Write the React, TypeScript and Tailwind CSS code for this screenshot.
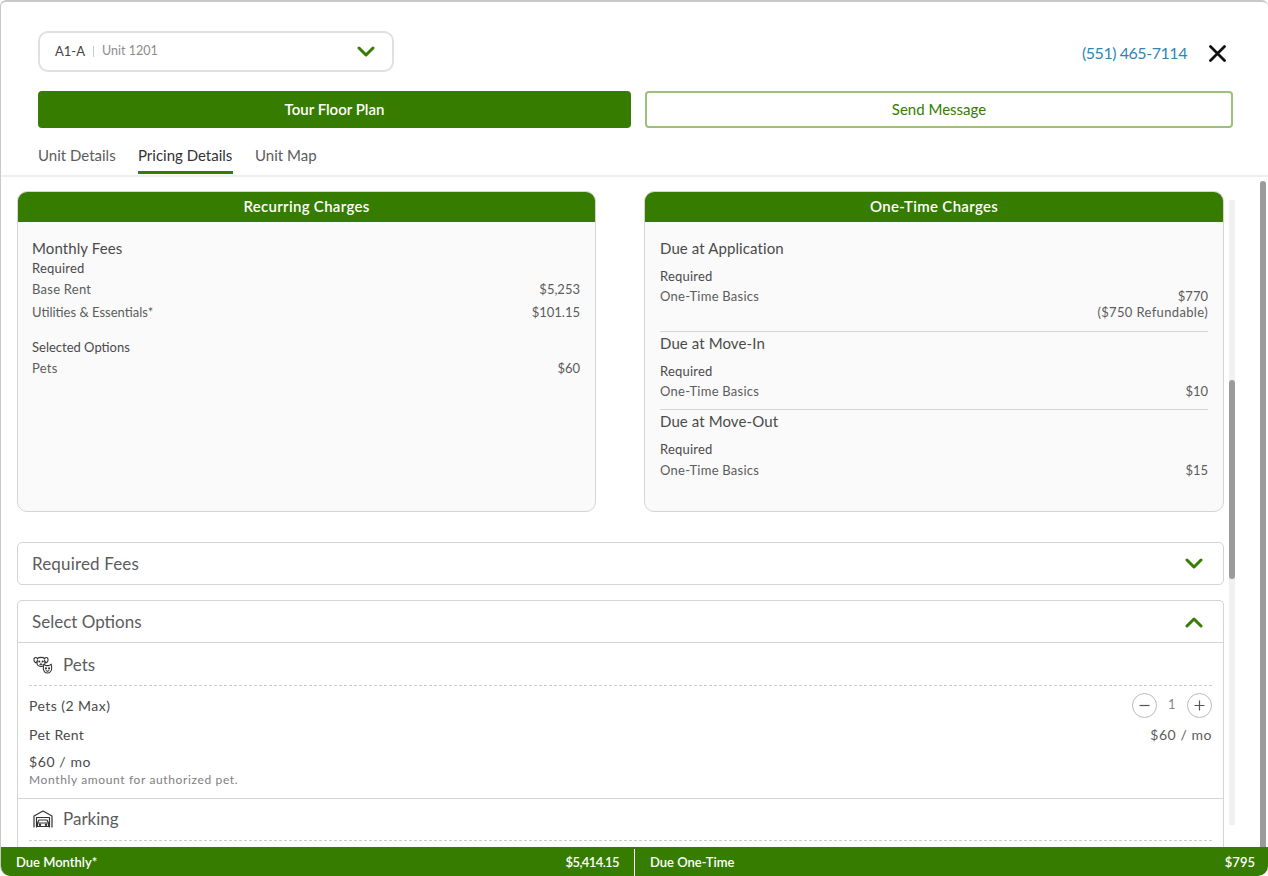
import React from "react";

const font = { fontFamily: '"Lato", "Noto Sans", sans-serif' };

function Chevron({ up = false }: { up?: boolean }) {
  return (
    <svg width="18" height="12" viewBox="0 0 18 12" fill="none" className="shrink-0">
      <path d={up ? "M2 10 L9 3 L16 10" : "M2 2 L9 9 L16 2"} stroke="#367c00" strokeWidth="3" strokeLinecap="round" strokeLinejoin="round" />
    </svg>
  );
}

function PetsIcon() {
  return (
    <svg width="20" height="18" viewBox="0 0 20 18" fill="none" stroke="#333" strokeWidth="1.1" strokeLinejoin="round" strokeLinecap="round">
      <path d="M4.5 2.5 C6 1 10 1 11.5 2.5 L12 7 C12 9 10 10.5 8 10.5 C6 10.5 4 9 4 7 Z" fill="#fff" />
      <path d="M4.5 2.5 C2.5 0.5 0.5 2 1 4.5 C1.3 6 2.5 7 3.5 6.5 L4.3 4.5" fill="#fff" />
      <path d="M11.5 2.5 C13.5 0.5 15.5 2 15 4.5 C14.7 6 13.5 7 12.5 6.5 L11.7 4.5" fill="#fff" />
      <circle cx="6.3" cy="5.5" r="0.5" fill="#333" />
      <circle cx="9.7" cy="5.5" r="0.5" fill="#333" />
      <path d="M8 7 V8.5 M6.8 8.8 L8 8.5 L9.2 8.8" />
      <path d="M10.3 11.5 L10.8 8.2 L13 9.6 H16 L18.2 8.2 L18.7 12 C18.7 15 16.7 17 14.5 17 C12.3 17 10.3 15 10.3 11.5 Z" fill="#fff" />
      <circle cx="12.9" cy="12.4" r="0.5" fill="#333" />
      <circle cx="16.1" cy="12.4" r="0.5" fill="#333" />
      <path d="M13.2 14.6 L14.5 15.4 L15.8 14.6" />
    </svg>
  );
}

function GarageIcon() {
  return (
    <svg width="20" height="18" viewBox="0 0 20 18" fill="none" stroke="#333" strokeWidth="1.2" strokeLinejoin="round" strokeLinecap="round">
      <path d="M1 17 V6 L10 1 L19 6 V17" />
      <path d="M3.5 17 V7.5 H16.5 V17" />
      <path d="M6 10 H14 L15.5 13 V16.5 H4.5 V13 Z" fill="#fff" />
      <path d="M5 13 H15" />
      <circle cx="7" cy="14.7" r="0.6" fill="#333" />
      <circle cx="13" cy="14.7" r="0.6" fill="#333" />
    </svg>
  );
}

function Row({ label, value, className = "" }: { label: string; value: React.ReactNode; className?: string }) {
  return (
    <div className={`flex justify-between text-[13px] leading-[16px] tracking-[0.25px] text-[#5c5c5c] ${className}`}>
      <span>{label}</span>
      <span className="text-right tracking-[0]">{value}</span>
    </div>
  );
}

function Card({ title, children, className = "" }: { title: string; children: React.ReactNode; className?: string }) {
  return (
    <div className={`h-[321px] rounded-[10px] border border-[#d4d4d4] bg-[#fafafa] overflow-hidden ${className}`}>
      <div className="h-[30px] pb-[2px] bg-[#367c00] text-white text-[15px] font-semibold tracking-[0.3px] flex items-center justify-center">{title}</div>
      <div className="px-[15px]">{children}</div>
    </div>
  );
}

function DueSection({ title, children }: { title: string; children: React.ReactNode }) {
  return (
    <div>
      <div className="text-[15px] leading-[20px] tracking-[0.1px] text-[#4a4a4a]">{title}</div>
      <div className="mt-[10px] text-[13px] leading-[16px] tracking-[0.2px] text-[#4a4a4a]">Required</div>
      {children}
    </div>
  );
}

export default function App() {
  return (
    <div style={font} className="w-[1268px] h-[876px] bg-white flex flex-col overflow-hidden border-t-2 border-t-[#c8c8c8] border-l border-l-[#c8c8c8] rounded-t-[6px] rounded-b-[10px]">
      <header className="h-[175px] shrink-0 border-b-2 border-[#eeeeee] pl-[37px] pr-[35px] flex flex-col">
        <div className="flex items-center justify-between pt-[29px]">
          <div className="w-[356px] h-[41px] rounded-[10px] border-2 border-[#e0e0e0] pl-[15px] pr-[17px] flex items-center justify-between">
            <div className="flex items-center text-[13px]">
              <span className="text-[#444]">A1-A</span>
              <span className="mx-[8px] w-px h-[11px] bg-[#cccccc]" />
              <span className="text-[#8c8c8c] text-[12.5px]">Unit 1201</span>
            </div>
            <Chevron />
          </div>
          <div className="flex items-center gap-[22px] pr-[7px] mt-[3px]">
            <span className="text-[#2f86b5] text-[16px] tracking-[-0.45px]">(551) 465-7114</span>
            <svg width="17" height="17" viewBox="0 0 17 17" fill="none">
              <path d="M1.5 1.5 L15.5 15.5 M15.5 1.5 L1.5 15.5" stroke="#111" strokeWidth="2.8" strokeLinecap="round" />
            </svg>
          </div>
        </div>
        <div className="flex gap-[14px] mt-[19px]">
          <button className="w-[593px] h-[37px] rounded-[4px] bg-[#367c00] text-white text-[15px] font-semibold">Tour Floor Plan</button>
          <button className="w-[588px] h-[37px] rounded-[4px] border-2 border-[#9cc07c] text-[#367c00] text-[15px]">Send Message</button>
        </div>
        <div className="flex gap-[22px] mt-[16px] text-[15px] text-[#5c5c5c]">
          <span className="h-[30px] leading-[22px] w-[78px] whitespace-nowrap">Unit Details</span>
          <span className="h-[30px] leading-[22px] text-[#333] border-b-[3px] border-[#367c00] w-[95px] whitespace-nowrap">Pricing Details</span>
          <span className="h-[30px] leading-[22px]">Unit Map</span>
        </div>
      </header>

      <div className="flex-1 min-h-0 flex overflow-hidden">
        <main className="w-[1207px] shrink-0 ml-[16px] pt-[14px] overflow-hidden">
          <div className="flex gap-[48px]">
            <Card title="Recurring Charges" className="w-[579px]">
              <div className="-ml-px">
                <div className="text-[15px] leading-[20px] tracking-[0.1px] text-[#4a4a4a] mt-[16px]">Monthly Fees</div>
                <div className="text-[13px] leading-[16px] tracking-[0.2px] text-[#4a4a4a] mt-[2px]">Required</div>
                <Row label="Base Rent" value="$5,253" className="mt-[5px]" />
                <Row label="Utilities & Essentials*" value="$101.15" className="mt-[7px] !tracking-[0]" />
                <div className="text-[13px] leading-[16px] text-[#4a4a4a] mt-[19px]">Selected Options</div>
                <Row label="Pets" value="$60" className="mt-[5px]" />
              </div>
            </Card>
            <Card title="One-Time Charges" className="w-[580px]">
              <div className="mt-[16px]">
                <DueSection title="Due at Application">
                  <Row label="One-Time Basics" value={<>$770<br /><span className="tracking-[0.35px]">($750 Refundable)</span></>} className="mt-[4px]" />
                </DueSection>
              </div>
              <div className="mt-[11px] border-t border-[#d4d4d4] pt-[1px]">
                <DueSection title="Due at Move-In">
                  <Row label="One-Time Basics" value="$10" className="mt-[4px]" />
                </DueSection>
              </div>
              <div className="mt-[10px] border-t border-[#d4d4d4] pt-[1px]">
                <DueSection title="Due at Move-Out">
                  <Row label="One-Time Basics" value="$15" className="mt-[5px]" />
                </DueSection>
              </div>
            </Card>
          </div>

          <div className="mt-[30px] h-[43px] rounded-[5px] border border-[#d4d4d4] pl-[14px] pr-[20px] flex items-center justify-between text-[17px] tracking-[0.15px] text-[#5c5c5c]">
            <span>Required Fees</span>
            <Chevron />
          </div>

          <div className="mt-[15px] rounded-t-[5px] border border-b-0 border-[#d4d4d4] h-[300px]">
            <div className="h-[42px] border-b border-[#d4d4d4] pl-[14px] pr-[20px] flex items-center justify-between text-[17px] text-[#5c5c5c]">
              <span>Select Options</span>
              <Chevron up />
            </div>
            <div className="px-[11px]">
              <div className="h-[43px] pt-[1px] border-b border-dashed border-[#cccccc] pl-[4px] flex items-center gap-[10px] text-[17px] text-[#5c5c5c]">
                <PetsIcon />
                <span>Pets</span>
              </div>
              <div className="flex justify-between items-center mt-[7px] h-[24px] text-[14px] tracking-[0.45px] text-[#4a4a4a]">
                <span>Pets (2 Max)</span>
                <div className="flex items-center">
                  <span className="w-[25px] h-[25px] rounded-full border border-[#bbbbbb] flex items-center justify-center">
                    <svg width="11" height="11" viewBox="0 0 11 11"><path d="M0.5 5.5 H10.5" stroke="#555" strokeWidth="1.2" /></svg>
                  </span>
                  <span className="w-[30px] text-center text-[13px] text-[#888]">1</span>
                  <span className="w-[25px] h-[25px] rounded-full border border-[#bbbbbb] flex items-center justify-center">
                    <svg width="11" height="11" viewBox="0 0 11 11"><path d="M0.5 5.5 H10.5 M5.5 0.5 V10.5" stroke="#555" strokeWidth="1.2" /></svg>
                  </span>
                </div>
              </div>
              <div className="flex justify-between mt-[9px] text-[14px] leading-[18px] tracking-[0.35px] text-[#4a4a4a]">
                <span>Pet Rent</span>
                <span className="text-[#5c5c5c] tracking-[0.55px]">$60 / mo</span>
              </div>
              <div className="mt-[9px] text-[14px] leading-[18px] tracking-[0.6px] text-[#4a4a4a]">$60 / mo</div>
              <div className="text-[12px] leading-[16px] text-[#808080] tracking-[0.63px] mt-[1px]">Monthly amount for authorized pet.</div>
            </div>
            <div className="mt-[10px] border-t border-[#d4d4d4] px-[11px]">
              <div className="h-[42px] pb-[2px] border-b border-dashed border-[#cccccc] pl-[4px] flex items-center gap-[10px] text-[17px] text-[#5c5c5c]">
                <GarageIcon />
                <span>Parking</span>
              </div>
            </div>
          </div>
        </main>

        <div className="ml-[5px] mt-[23px] mb-[22px] w-[6px] bg-[#f1f1f1] shrink-0 overflow-hidden">
          <div className="mt-[180px] h-[199px] rounded-[3px] bg-[#9b9b9b]" />
        </div>
        <div className="ml-[25px] mt-[4px] w-[6px] rounded-t-[3px] bg-[#9b9b9b] shrink-0" />
      </div>

      <footer className="h-[29px] shrink-0 -ml-px pt-[2px] bg-[#367c00] text-white text-[13px] font-semibold flex">
        <div className="w-[635px] border-r border-[#ffffff] pl-[16px] pr-[15px] flex items-center justify-between">
          <span>Due Monthly*</span>
          <span className="tracking-[-0.6px]">$5,414.15</span>
        </div>
        <div className="flex-1 pl-[15px] pr-[13px] flex items-center justify-between">
          <span>Due One-Time</span>
          <span>$795</span>
        </div>
      </footer>
    </div>
  );
}
